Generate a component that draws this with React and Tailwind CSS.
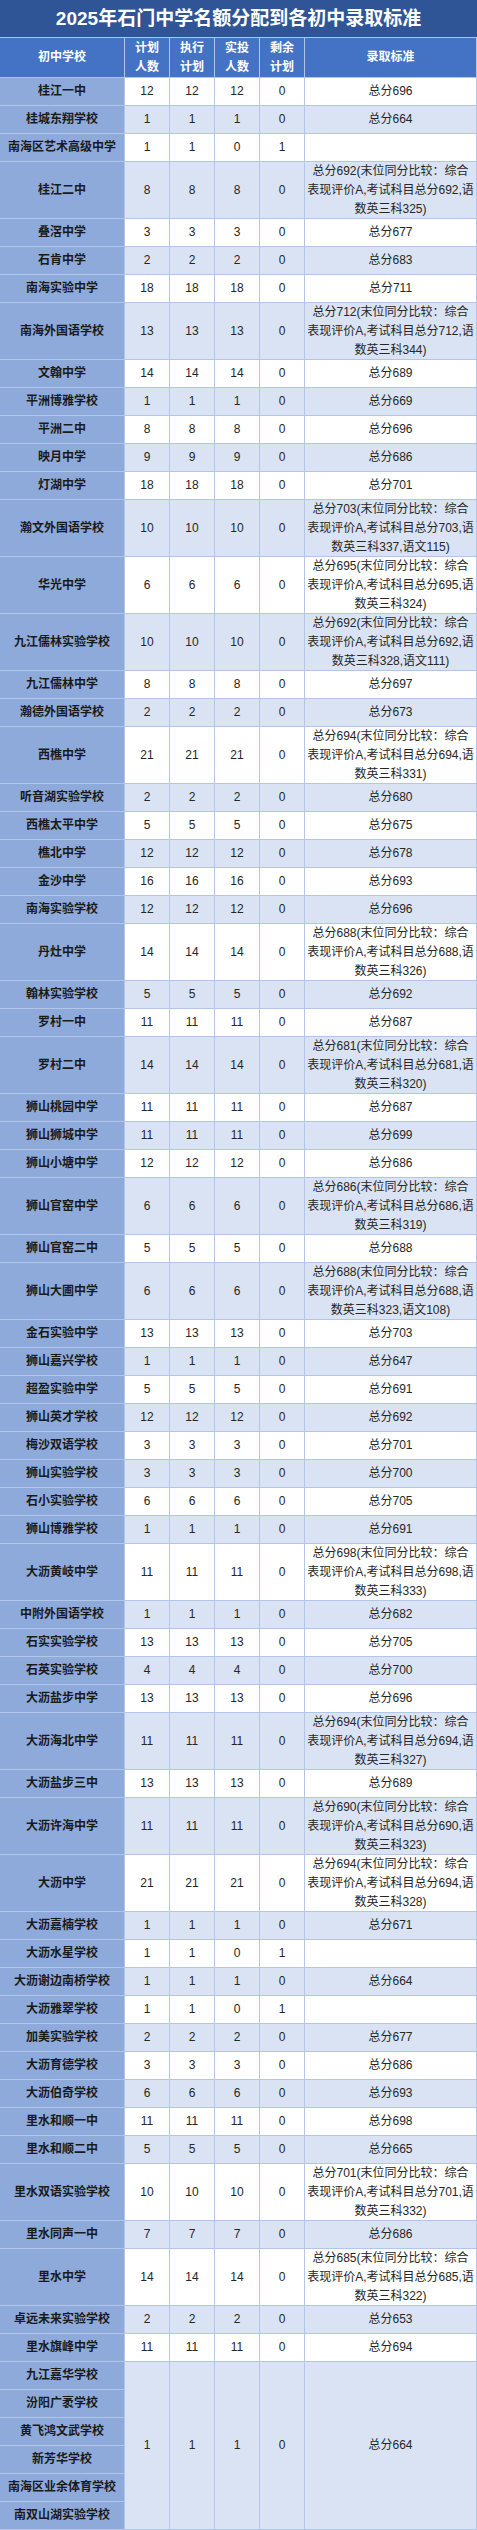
const note = (total, three, extra) => [
  `总分${total}(末位同分比较：综合`,
  `表现评价A,考试科目总分${total},语`,
  `数英三科${three}${extra ? `,${extra}` : ''})`
];

const rows = [
  ['桂江一中', 12, 12, 12, 0, '总分696'],
  ['桂城东翔学校', 1, 1, 1, 0, '总分664'],
  ['南海区艺术高级中学', 1, 1, 0, 1, ''],
  ['桂江二中', 8, 8, 8, 0, note(692, 325)],
  ['叠滘中学', 3, 3, 3, 0, '总分677'],
  ['石肯中学', 2, 2, 2, 0, '总分683'],
  ['南海实验中学', 18, 18, 18, 0, '总分711'],
  ['南海外国语学校', 13, 13, 13, 0, note(712, 344)],
  ['文翰中学', 14, 14, 14, 0, '总分689'],
  ['平洲博雅学校', 1, 1, 1, 0, '总分669'],
  ['平洲二中', 8, 8, 8, 0, '总分696'],
  ['映月中学', 9, 9, 9, 0, '总分686'],
  ['灯湖中学', 18, 18, 18, 0, '总分701'],
  ['瀚文外国语学校', 10, 10, 10, 0, note(703, 337, '语文115')],
  ['华光中学', 6, 6, 6, 0, note(695, 324)],
  ['九江儒林实验学校', 10, 10, 10, 0, note(692, 328, '语文111')],
  ['九江儒林中学', 8, 8, 8, 0, '总分697'],
  ['瀚德外国语学校', 2, 2, 2, 0, '总分673'],
  ['西樵中学', 21, 21, 21, 0, note(694, 331)],
  ['听音湖实验学校', 2, 2, 2, 0, '总分680'],
  ['西樵太平中学', 5, 5, 5, 0, '总分675'],
  ['樵北中学', 12, 12, 12, 0, '总分678'],
  ['金沙中学', 16, 16, 16, 0, '总分693'],
  ['南海实验学校', 12, 12, 12, 0, '总分696'],
  ['丹灶中学', 14, 14, 14, 0, note(688, 326)],
  ['翰林实验学校', 5, 5, 5, 0, '总分692'],
  ['罗村一中', 11, 11, 11, 0, '总分687'],
  ['罗村二中', 14, 14, 14, 0, note(681, 320)],
  ['狮山桃园中学', 11, 11, 11, 0, '总分687'],
  ['狮山狮城中学', 11, 11, 11, 0, '总分699'],
  ['狮山小塘中学', 12, 12, 12, 0, '总分686'],
  ['狮山官窑中学', 6, 6, 6, 0, note(686, 319)],
  ['狮山官窑二中', 5, 5, 5, 0, '总分688'],
  ['狮山大圃中学', 6, 6, 6, 0, note(688, 323, '语文108')],
  ['金石实验中学', 13, 13, 13, 0, '总分703'],
  ['狮山嘉兴学校', 1, 1, 1, 0, '总分647'],
  ['超盈实验中学', 5, 5, 5, 0, '总分691'],
  ['狮山英才学校', 12, 12, 12, 0, '总分692'],
  ['梅沙双语学校', 3, 3, 3, 0, '总分701'],
  ['狮山实验学校', 3, 3, 3, 0, '总分700'],
  ['石小实验学校', 6, 6, 6, 0, '总分705'],
  ['狮山博雅学校', 1, 1, 1, 0, '总分691'],
  ['大沥黄岐中学', 11, 11, 11, 0, note(698, 333)],
  ['中附外国语学校', 1, 1, 1, 0, '总分682'],
  ['石实实验学校', 13, 13, 13, 0, '总分705'],
  ['石英实验学校', 4, 4, 4, 0, '总分700'],
  ['大沥盐步中学', 13, 13, 13, 0, '总分696'],
  ['大沥海北中学', 11, 11, 11, 0, note(694, 327)],
  ['大沥盐步三中', 13, 13, 13, 0, '总分689'],
  ['大沥许海中学', 11, 11, 11, 0, note(690, 323)],
  ['大沥中学', 21, 21, 21, 0, note(694, 328)],
  ['大沥嘉楠学校', 1, 1, 1, 0, '总分671'],
  ['大沥水星学校', 1, 1, 0, 1, ''],
  ['大沥谢边南桥学校', 1, 1, 1, 0, '总分664'],
  ['大沥雅翠学校', 1, 1, 0, 1, ''],
  ['加美实验学校', 2, 2, 2, 0, '总分677'],
  ['大沥育德学校', 3, 3, 3, 0, '总分686'],
  ['大沥伯奇学校', 6, 6, 6, 0, '总分693'],
  ['里水和顺一中', 11, 11, 11, 0, '总分698'],
  ['里水和顺二中', 5, 5, 5, 0, '总分665'],
  ['里水双语实验学校', 10, 10, 10, 0, note(701, 332)],
  ['里水同声一中', 7, 7, 7, 0, '总分686'],
  ['里水中学', 14, 14, 14, 0, note(685, 322)],
  ['卓远未来实验学校', 2, 2, 2, 0, '总分653'],
  ['里水旗峰中学', 11, 11, 11, 0, '总分694']
];

const groupNames = ['九江嘉华学校', '汾阳广袤学校', '黄飞鸿文武学校', '新芳华学校', '南海区业余体育学校', '南双山湖实验学校'];

const cell = 'flex items-center justify-center border-r border-b border-[#b4c6e7] text-center';
const widths = ['w-[125px]', 'w-[45px]', 'w-[45px]', 'w-[45px]', 'w-[45px]', 'w-[172px]'];

function Row({ row, index }) {
  const [name, a, b, c, d, rule] = row;
  const tall = Array.isArray(rule);
  const bg = index % 2 === 0 ? 'bg-white' : 'bg-[#dae3f3]';
  const h = tall ? 'h-[57px]' : 'h-[28px]';
  return (
    <div className={`flex ${h}`}>
      <div className={`${cell} ${widths[0]} bg-[#8eaadb] font-bold text-[#1a1a1a]`}>{name}</div>
      {[a, b, c, d].map((v, i) => (
        <div key={i} className={`${cell} ${widths[i + 1]} ${bg}`}>{v}</div>
      ))}
      <div className={`${cell} ${widths[5]} ${bg} flex-col`}>
        {tall ? rule.map((line) => (
          <span key={line} className="block whitespace-nowrap">{line}</span>
        )) : rule}
      </div>
    </div>
  );
}

export default function App() {
  return (
    <div className="w-[477px] bg-white font-['Liberation_Sans','Noto_Sans_CJK_SC',sans-serif] text-[12px] leading-[19px] text-[#262626]">
      <div className="flex h-[38px] items-center justify-center border-b border-[#b4c6e7] bg-[#2f5597] text-[19px] font-bold text-white">
        2025年石门中学名额分配到各初中录取标准
      </div>
      <div className="flex h-[40px] bg-[#4472c4] font-bold text-white">
        <div className={`${cell} ${widths[0]}`}>初中学校</div>
        <div className={`${cell} ${widths[1]} flex-col`}><span>计划</span><span>人数</span></div>
        <div className={`${cell} ${widths[2]} flex-col`}><span>执行</span><span>计划</span></div>
        <div className={`${cell} ${widths[3]} flex-col`}><span>实投</span><span>人数</span></div>
        <div className={`${cell} ${widths[4]} flex-col`}><span>剩余</span><span>计划</span></div>
        <div className={`${cell} ${widths[5]}`}>录取标准</div>
      </div>
      {rows.map((row, i) => (
        <Row key={row[0]} row={row} index={i} />
      ))}
      <div className="flex h-[168px]">
        <div className="flex w-[125px] flex-col">
          {groupNames.map((n) => (
            <div key={n} className={`${cell} h-[28px] bg-[#8eaadb] font-bold text-[#1a1a1a]`}>{n}</div>
          ))}
        </div>
        {[1, 1, 1, 0].map((v, i) => (
          <div key={i} className={`${cell} ${widths[i + 1]} bg-[#dae3f3]`}>{v}</div>
        ))}
        <div className={`${cell} ${widths[5]} bg-[#dae3f3]`}>总分664</div>
      </div>
    </div>
  );
}
